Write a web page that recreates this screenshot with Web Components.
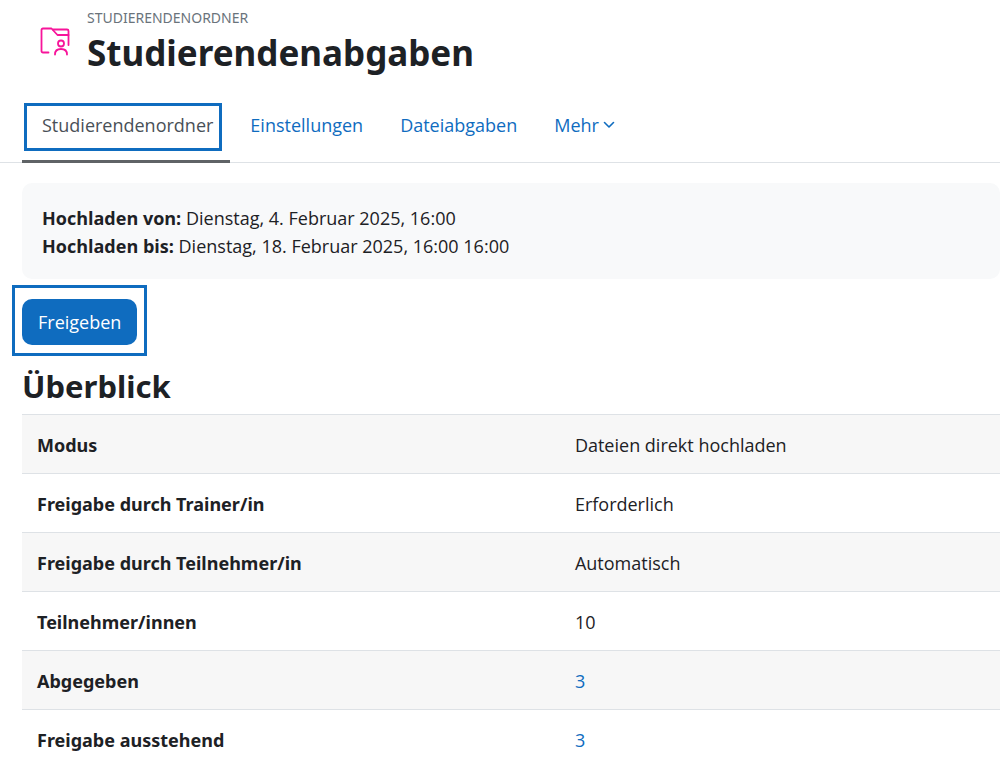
<!DOCTYPE html>
<html lang="de">
<head>
<meta charset="utf-8">
<meta name="viewport" content="width=device-width, initial-scale=1">
<title>Studierendenabgaben</title>
<style>
  body {
    margin: 0;
    background: #fff;
    color: #1d2125;
    font-family: "Open Sans", "Noto Sans", sans-serif;
    font-size: 18px;
    line-height: 28px;
    --link: #0f6cbf;
    --line: #dee2e6;
    --strong-font: "Noto Sans", "Open Sans", sans-serif;
  }
</style>
</head>
<body>
<folder-page></folder-page>

<script>
const define = (name, html) => {
  const template = document.createElement('template');
  template.innerHTML = html;
  customElements.define(name, class extends HTMLElement {
    constructor() {
      super();
      this.attachShadow({ mode: 'open' }).append(template.content.cloneNode(true));
    }
  });
};

define('activity-header', `
  <style>
    :host { display: flex; gap: 16px; padding: 7px 0 0 39px; font-family: var(--strong-font); }
    svg { flex: none; width: 32px; height: 32px; margin-top: 19px; }
    .kind { font-size: 14px; line-height: 22px; color: #6a737b; text-transform: uppercase; }
    h1 { margin: 0; font-size: 35px; line-height: 48px; font-weight: 700; }
  </style>
  <svg viewBox="0 0 32 32" fill="none" stroke="#f7149a" stroke-width="1.8" stroke-linecap="round" stroke-linejoin="round" aria-hidden="true">
    <path d="M9.500 26.500H4Q2.500 26.500 2.500 25V4Q2.500 2.500 4 2.500H12.500L18.500 9H29.500"/>
    <path d="M14 3.500H28Q29.500 3.500 29.500 5V19"/>
    <circle cx="22" cy="17.500" r="3"/>
    <path d="M16 28.500Q16 23 22 23T28 28.500"/>
  </svg>
  <div>
    <div class="kind"><slot name="kind"></slot></div>
    <h1><slot></slot></h1>
  </div>`);

define('tab-bar', `
  <style>
    :host { display: block; margin-top: 23px; border-bottom: 1px solid var(--line); }
    nav { display: flex; margin: 0 0 -1px 22px; }
  </style>
  <nav aria-label="Aktivität"><slot></slot></nav>`);

customElements.define('tab-item', class extends HTMLElement {
  connectedCallback() {
    const active = this.hasAttribute('active');
    const menu = this.hasAttribute('menu');
    this.attachShadow({ mode: 'open' }).innerHTML = `
      <style>
        :host { display: block; position: relative; }
        a { display: flex; align-items: center; gap: 4px; padding: 11px 17px 21px 20px;
            border-bottom: 3px solid transparent; color: var(--link); text-decoration: none; white-space: nowrap; }
        a[aria-current] { color: #495057; border-color: #5f6366; }
        :host([active])::before { content: ""; position: absolute; inset: 3px 8px 12px 2px;
            border: 3px solid var(--link); pointer-events: none; }
        svg { width: 12px; height: 12px; }
      </style>
      <a href="#" ${active ? 'aria-current="page"' : ''}><slot></slot>${menu ? `
        <svg viewBox="0 0 12 12" fill="none" stroke="currentColor" stroke-width="1.600" stroke-linecap="round" stroke-linejoin="round" aria-hidden="true"><path d="M1.500 3.500L6 8L10.500 3.500"/></svg>` : ''}</a>`;
  }
});

define('info-panel', `
  <style>
    :host { display: block; padding: 21px 20px 19px; border-radius: 10px; background: #f8f9fa; }
  </style>
  <slot></slot>`);

define('info-line', `
  <style>
    :host { display: block; }
    .label { font-weight: 700; }
  </style>
  <span class="label"><slot name="label"></slot></span> <slot></slot>`);

define('marked-button', `
  <style>
    :host { display: block; width: fit-content; margin: 6px 0 0 -10px; padding: 11px 7px 8px; border: 3px solid var(--link); }
    button { display: block; margin: 0; padding: 9px 16px; border: 0; border-radius: 10px;
             background: var(--link); color: #fff; font: inherit; cursor: pointer; }
  </style>
  <button type="button"><slot></slot></button>`);

customElements.define('overview-table', class extends HTMLElement {
  connectedCallback() {
    const rows = [
      ['Modus', 'Dateien direkt hochladen'],
      ['Freigabe durch Trainer/in', 'Erforderlich'],
      ['Freigabe durch Teilnehmer/in', 'Automatisch'],
      ['Teilnehmer/innen', '10'],
      ['Abgegeben', '<a href="#">3</a>'],
      ['Freigabe ausstehend', '<a href="#">3</a>'],
    ];
    this.attachShadow({ mode: 'open' }).innerHTML = `
      <style>
        :host { display: block; }
        h2 { margin: 9px 0 7px; font-family: var(--strong-font); font-size: 31px; line-height: 42px; font-weight: 700; }
        table { width: 100%; border-collapse: collapse; table-layout: fixed; }
        th, td { padding: 16px 15px 14px; border-top: 1px solid var(--line); text-align: left; vertical-align: top; }
        th { width: 55%; box-sizing: border-box; font-family: var(--strong-font); font-weight: 700; }
        tr:nth-child(odd) { background: #f7f7f7; }
        a { color: var(--link); text-decoration: none; }
      </style>
      <h2 id="title">Überblick</h2>
      <table aria-labelledby="title"><tbody>
        ${rows.map(([k, v]) => `<tr><th scope="row">${k}</th><td>${v}</td></tr>`).join('')}
      </tbody></table>`;
  }
});

define('folder-page', `
  <style>
    :host { display: block; }
    main { padding: 20px 0 0 22px; }
  </style>
  <activity-header><span slot="kind">Studierendenordner</span>Studierendenabgaben</activity-header>
  <tab-bar>
    <tab-item active>Studierendenordner</tab-item>
    <tab-item>Einstellungen</tab-item>
    <tab-item>Dateiabgaben</tab-item>
    <tab-item menu>Mehr</tab-item>
  </tab-bar>
  <main>
    <info-panel>
      <info-line><span slot="label">Hochladen von:</span>Dienstag, 4. Februar 2025, 16:00</info-line>
      <info-line><span slot="label">Hochladen bis:</span>Dienstag, 18. Februar 2025, 16:00 16:00</info-line>
    </info-panel>
    <marked-button>Freigeben</marked-button>
    <overview-table></overview-table>
  </main>`);
</script>
</body>
</html>
